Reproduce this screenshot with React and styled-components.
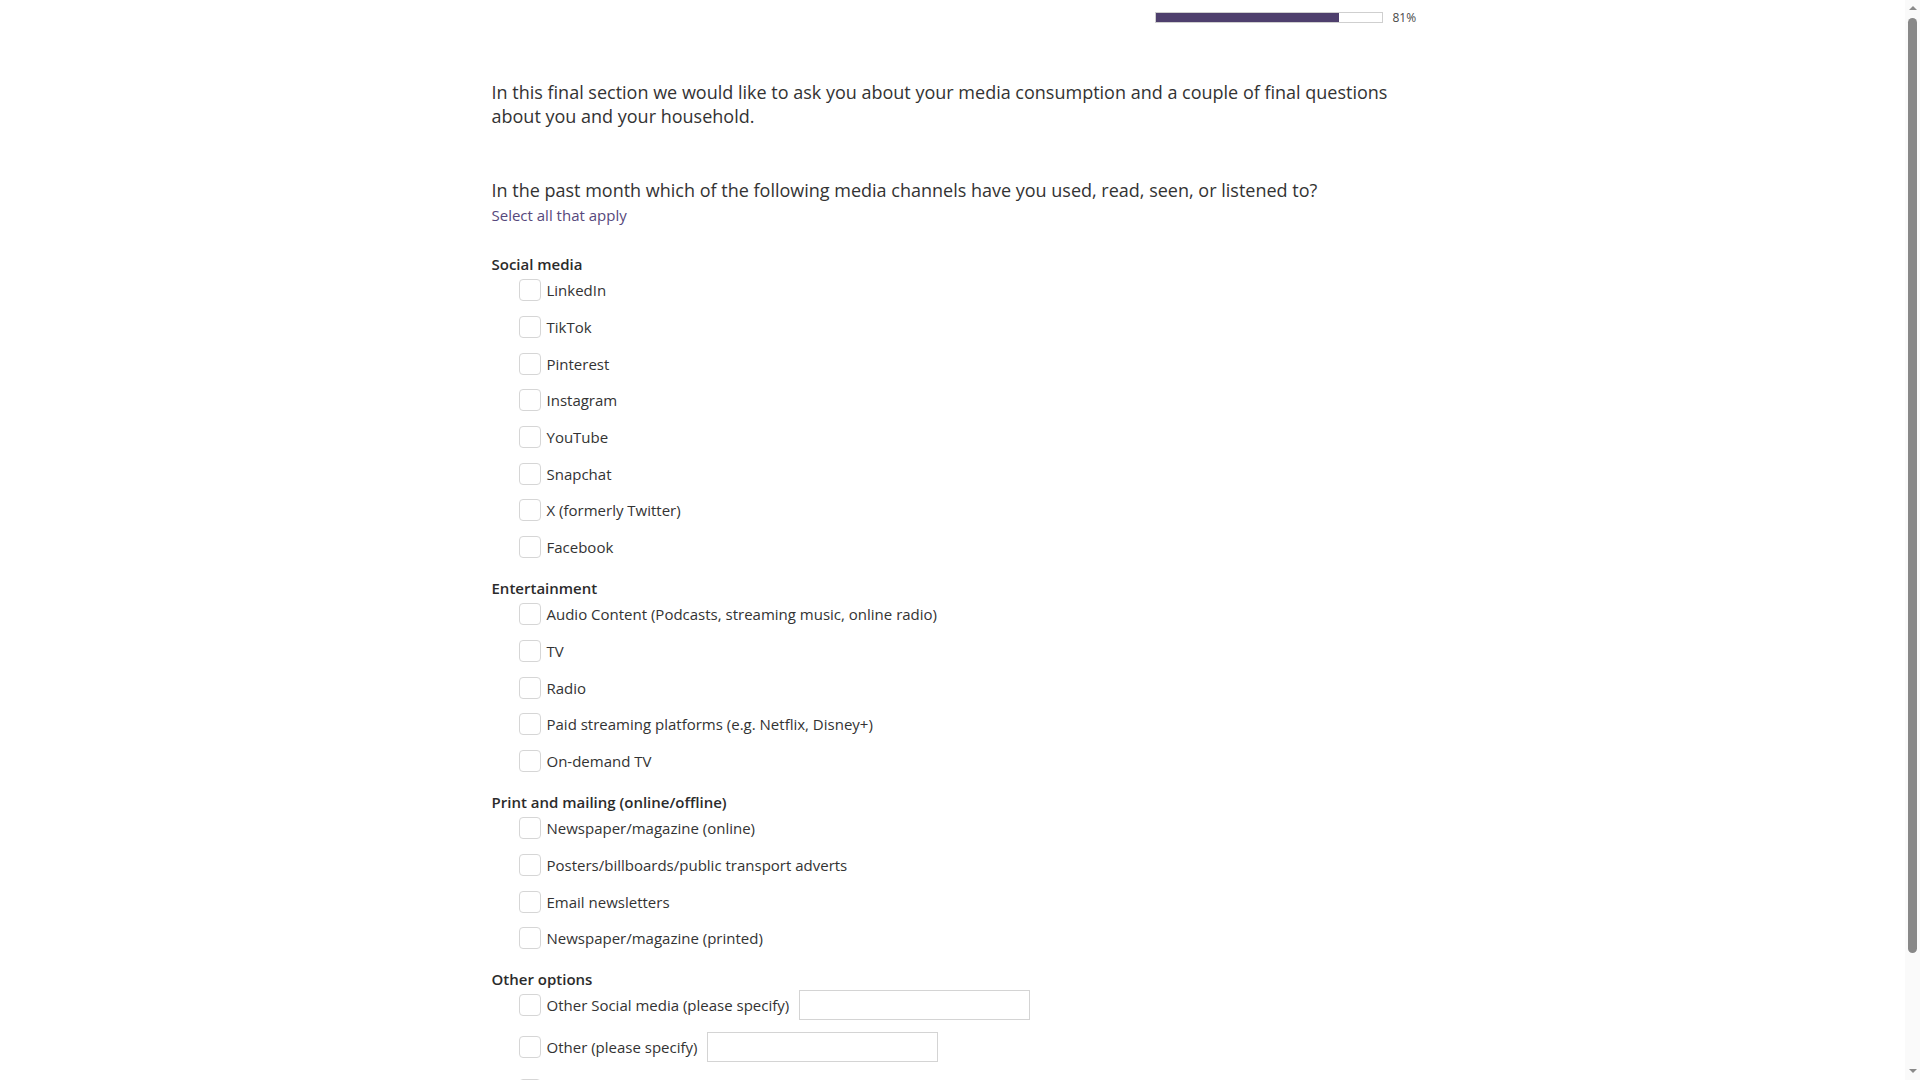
import styled, { createGlobalStyle } from "styled-components";

const GlobalStyle = createGlobalStyle`
  html, body {
    margin: 0;
    padding: 0;
    background: #fff;
  }
  body {
    font-family: "Open Sans", "Noto Sans", sans-serif;
    color: #333;
  }
`;

const sections = [
  {
    title: "Social media",
    items: [
      "LinkedIn",
      "TikTok",
      "Pinterest",
      "Instagram",
      "YouTube",
      "Snapchat",
      "X (formerly Twitter)",
      "Facebook",
    ],
  },
  {
    title: "Entertainment",
    items: [
      "Audio Content (Podcasts, streaming music, online radio)",
      "TV",
      "Radio",
      "Paid streaming platforms (e.g. Netflix, Disney+)",
      "On-demand TV",
    ],
  },
  {
    title: "Print and mailing (online/offline)",
    items: [
      "Newspaper/magazine (online)",
      "Posters/billboards/public transport adverts",
      "Email newsletters",
      "Newspaper/magazine (printed)",
    ],
  },
];

const otherItems = [
  { label: "Other Social media (please specify)", input: true },
  { label: "Other (please specify)", input: true },
  { label: "None of these", input: false },
];

export default function App() {
  const progress = 81;
  return (
    <>
      <GlobalStyle />
      <Viewport>
        <Page>
          <ProgressRow>
            <ProgressTrack>
              <ProgressFill style={{ width: `${progress}%` }} />
            </ProgressTrack>
            <ProgressLabel>{progress}%</ProgressLabel>
          </ProgressRow>

          <Intro>
            In this final section we would like to ask you about your media
            consumption and a couple of final questions about you and your
            household.
          </Intro>

          <Question>
            In the past month which of the following media channels have you
            used, read, seen, or listened to?
          </Question>
          <Hint>Select all that apply</Hint>

          {sections.map((s, i) => (
            <Section key={s.title} $first={i === 0}>
              <SectionTitle>{s.title}</SectionTitle>
              {s.items.map((item) => (
                <Row key={item}>
                  <Box />
                  <Label>{item}</Label>
                </Row>
              ))}
            </Section>
          ))}

          <Section>
            <SectionTitle>Other options</SectionTitle>
            {otherItems.map((item) => (
              <Row key={item.label} $tall={item.input}>
                <Box />
                <Label>{item.label}</Label>
                {item.input && <SpecifyInput type="text" />}
              </Row>
            ))}
          </Section>
        </Page>
      </Viewport>

      <ScrollBar>
        <ScrollArrow $dir="up" />
        <ScrollThumb />
        <ScrollSpacer />
        <ScrollArrow $dir="down" />
      </ScrollBar>
    </>
  );
}

const Viewport = styled.div`
  padding-right: 15px;
`;

const Page = styled.div`
  width: 922px;
  margin: 0 auto;
  padding-bottom: 110px;
`;

const ProgressRow = styled.div`
  display: flex;
  justify-content: flex-end;
  align-items: center;
  padding-top: 12px;
  height: 11px;
`;

const ProgressTrack = styled.div`
  width: 226px;
  height: 9px;
  border: 1px solid #cfcfcf;
  background: #fff;
`;

const ProgressFill = styled.div`
  height: 100%;
  background: #4e3f6d;
`;

const ProgressLabel = styled.span`
  margin-left: 10px;
  font-size: 12px;
  color: #4a4a4a;
  width: 21px;
`;

const Intro = styled.p`
  margin: 57px 0 0;
  font-size: 18px;
  line-height: 24px;
  color: #333;
`;

const Question = styled.p`
  margin: 50px 0 0;
  font-size: 18px;
  line-height: 24px;
  color: #333;
`;

const Hint = styled.div`
  margin-top: 3px;
  font-size: 15px;
  line-height: 20px;
  color: #56487c;
`;

const Section = styled.div`
  margin-top: ${(p) => (p.$first ? "29px" : "12.5px")};
`;

const SectionTitle = styled.div`
  font-size: 15px;
  line-height: 20px;
  font-weight: 600;
  color: #2b2b2b;
  margin-bottom: -2px;
`;

const Row = styled.div`
  display: flex;
  align-items: center;
  padding: ${(p) => (p.$tall ? "3px 0 9px" : "7.35px 0")};
  padding-left: 27px;
  min-height: 22px;
`;

const Box = styled.span`
  flex: 0 0 auto;
  width: 20px;
  height: 20px;
  border: 1px solid #d6d6d6;
  border-radius: 4px;
  background: #fff;
`;

const Label = styled.span`
  margin-left: 6px;
  font-size: 15px;
  line-height: 20px;
  color: #333;
`;

const SpecifyInput = styled.input`
  margin-left: 10px;
  width: 231px;
  height: 30px;
  box-sizing: border-box;
  border: 1px solid #d4d4d4;
  border-radius: 0;
  padding: 4px 6px;
  font-family: inherit;
  font-size: 14px;
  outline: none;
`;

/* browser scrollbar as seen in the screenshot */
const ScrollBar = styled.div`
  position: fixed;
  top: 0;
  right: 0;
  width: 15px;
  height: 100vh;
  background: #fafafa;
  display: flex;
  flex-direction: column;
  align-items: center;
`;

const ScrollArrow = styled.div`
  width: 0;
  height: 0;
  border-left: 4px solid transparent;
  border-right: 4px solid transparent;
  ${(p) =>
    p.$dir === "up"
      ? "border-bottom: 4px solid #8a8a8a; margin-top: 6px;"
      : "border-top: 4px solid #8a8a8a; margin-bottom: 7px;"}
`;

const ScrollThumb = styled.div`
  margin-top: 8px;
  width: 9px;
  height: 935px;
  border-radius: 5px;
  background: #888;
`;

const ScrollSpacer = styled.div`
  flex: 1;
`;
